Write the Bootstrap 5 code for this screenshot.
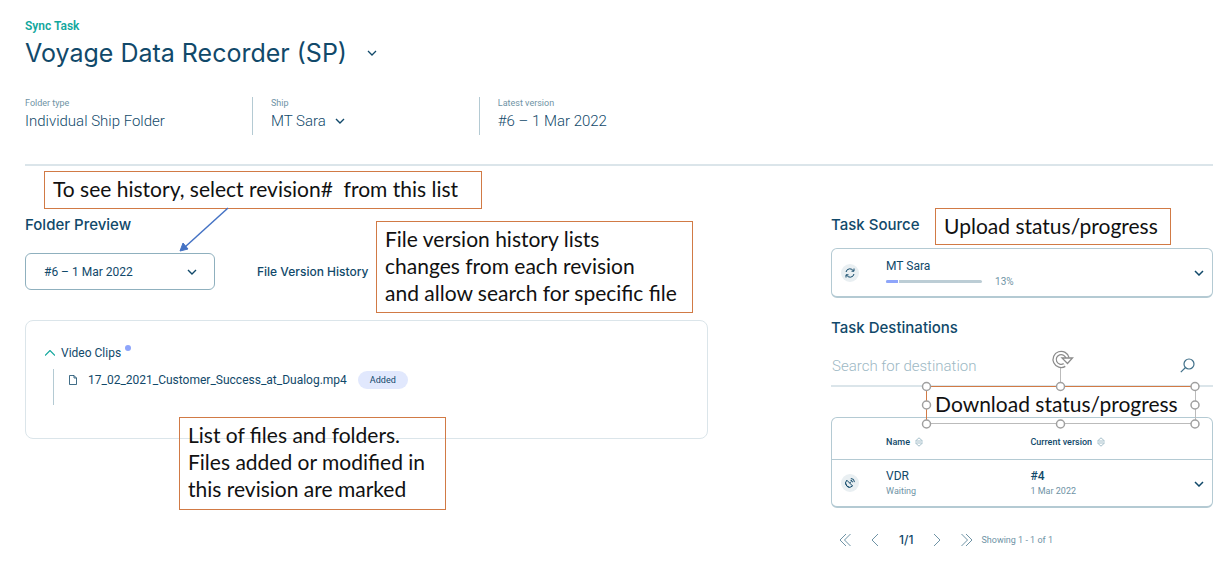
<!DOCTYPE html>
<html lang="en">
<head>
<meta charset="utf-8">
<meta name="viewport" content="width=device-width, initial-scale=1">
<title>Sync Task – Voyage Data Recorder (SP)</title>
<link href="https://cdn.jsdelivr.net/npm/bootstrap@5.3.0/dist/css/bootstrap.min.css" rel="stylesheet">
<style>
:root{--ink:#11496a;--soft:#41708a;--mute:#6f93a5;--edge:#b4cad3;--pale:#dbe5ea;--teal:#12a79d;--note:#d17a45}
body{font-family:Roboto,"Liberation Sans",sans-serif;font-size:12px;line-height:16px;color:var(--ink);background:#fff}
svg{display:block;fill:none;stroke:currentColor;flex:none}
.page{padding:18px 6px 12px 25px}
.geo{font-family:Inter,"Open Sans",sans-serif}
.kicker{color:var(--teal);font-weight:600}
.title{font-size:25px;line-height:36px;font-weight:400;gap:20px;margin:1px 0 26px}
.plain{border:0;background:none;padding:0;color:inherit}
.facts{padding-bottom:29px;border-bottom:2px solid var(--pale)}
.fact{width:19.1%;height:38px;font-size:15px;line-height:20px;font-weight:300;color:var(--ink)}
.fact + .fact{border-left:1px solid var(--edge);padding-left:18px}
.fact-value{margin-top:2px}
.tiny{font-size:9px;line-height:12px;font-weight:400;color:var(--mute)}
.pick{appearance:none;border:0;padding:0 18px 0 0;color:inherit;font-weight:inherit;background:url("data:image/svg+xml,%3Csvg xmlns='http://www.w3.org/2000/svg' viewBox='0 0 10 6'%3E%3Cpath d='M1 1l4 4 4-4' fill='none' stroke='%2311496a' stroke-width='1.4'/%3E%3C/svg%3E") no-repeat right center/10px 6px}
.split{grid-template-columns:57.5% 32.15%;justify-content:space-between;padding-top:47px}
.head{font-size:15px;line-height:24px;font-weight:500;margin:0}
.revision{width:190px;height:37px;border:1px solid #8fb0be;border-radius:6px;padding-left:18px;background-position:right 17px center;font-size:12px;line-height:16px}
.history{font-size:12px;font-weight:500;color:var(--ink);margin-left:42px}
.files{margin-top:30px;border:1px solid var(--pale);border-radius:8px;padding:24px 19px 33px}
.files .dot{width:6px;height:6px;border-radius:50%;background:#8ea5fb;margin-left:4px}
.folder{gap:6px}
.teal{color:var(--teal)}
.tree{height:36px;margin:8px 0 0 8px;border-left:1px solid var(--edge);padding-left:15px}
.tree-row{gap:11px;height:22px}
.added{background:#e1e8fd;color:var(--ink);font-size:9px;line-height:18px;padding:0 12px;border-radius:9px}
.panel{border:1px solid var(--edge);border-bottom-width:2px;border-radius:6px}
.source{margin-top:11px;height:50px}
.source-name{line-height:18px}
.c-icon{width:54px;padding-left:9px}
.round{width:18px;height:18px;border-radius:50%;background:#e9eff2}
.track{width:96px;height:3px;border-radius:2px;background:#bccdd5;overflow:hidden}
.track span{display:block;height:3px;background:#8ea5fb;border-right:1px solid #fff}
.percent{font-size:10px;line-height:14px;margin-left:13px;color:var(--mute)}
.second{margin-top:18px}
.find{height:41px;margin-top:6px;border-bottom:2px solid var(--pale)}
.find input{border:0;outline:0;padding:0 1px;font-size:15px;font-weight:300;color:var(--ink);background:none;min-width:0}
.find input::placeholder{color:#9db8c4;opacity:1}
.find button{color:var(--soft);margin-right:18px}
.ships{margin-top:30px}
.ships table{width:100%;table-layout:fixed}
.ships th{font-size:9px;line-height:12px;font-weight:500;height:41px;padding:8px 0 0;border-bottom:1px solid var(--edge)}
.ships td{height:47px;padding:0}
.ships .state{line-height:14px}
.ships .c-icon{padding-left:9px}
.c-name{width:38%}
.c-more{width:18px}
.sorter{color:#a5bfca}
.pager{margin-top:20px;height:24px;color:var(--mute);padding-left:8px}
.page-no{color:var(--ink);font-weight:500}
/* callouts laid over the page */
.note{position:absolute;border:1px solid var(--note);font-family:Lato,"Open Sans",sans-serif;font-size:21px;line-height:27px;color:#111;padding:3px 8px;white-space:pre}
.n-list{left:19px;top:5px;width:438px;height:38px}
.n-hist{left:351px;top:55px;width:317px;height:92px}
.n-file{left:154px;top:251px;width:267px;height:93px}
.n-up{left:104px;top:-5px;width:236px;height:37px}
.n-down{left:95px;top:173px;width:270px;height:38px;border-color:var(--note) #bbb #bbb var(--note)}
.arrow{position:absolute;left:152px;top:41px;color:#4472c4}
.grips{position:absolute;left:-6px;top:-38px}
</style>
</head>
<body>
<main class="page">
  <header>
    <div class="kicker">Sync Task</div>
    <h1 class="title geo d-flex align-items-center">Voyage Data Recorder (SP)
      <button class="plain" aria-label="Switch task"><svg width="10" height="6" viewBox="0 0 10 6" stroke-width="1.3"><path d="M1 1l4 4 4-4"/></svg></button></h1>
    <div class="facts d-flex">
      <div class="fact"><div class="tiny">Folder type</div><div class="fact-value">Individual Ship Folder</div></div>
      <div class="fact"><label class="tiny d-block" for="ship">Ship</label><select id="ship" class="pick fact-value"><option>MT Sara</option></select></div>
      <div class="fact"><div class="tiny">Latest version</div><div class="fact-value">#6 – 1 Mar 2022</div></div>
    </div>
  </header>

  <div class="split d-grid position-relative">
    <section>
      <h2 class="head geo"><label for="rev">Folder Preview</label></h2>
      <div class="d-flex align-items-center mt-3">
        <select id="rev" class="pick revision"><option>#6 – 1 Mar 2022</option></select>
        <a href="#history" class="history geo text-decoration-none">File Version History</a>
      </div>
      <div class="files">
        <div class="folder d-flex align-items-center">
          <button class="plain" aria-label="Collapse Video Clips"><svg class="teal" width="10" height="6" viewBox="0 0 10 6" stroke-width="1.2"><path d="M0 5.500l5-5 5 5"/></svg></button>
          <span class="d-flex">Video Clips<span class="dot"></span></span>
        </div>
        <div class="tree"><div class="tree-row d-flex align-items-center">
          <svg width="8" height="10" viewBox="0 0 8 10" stroke-width=".8"><path d="M.5.500h4.500L7.500 3v6.500h-7zM5 .5V3h2.500"/></svg>
          <span>17_02_2021_Customer_Success_at_Dualog.mp4</span><span class="added">Added</span>
        </div></div>
      </div>
    </section>

    <section class="position-relative">
      <h2 class="head geo">Task Source</h2>
      <div class="panel source d-flex align-items-center">
        <div class="c-icon"><div class="round d-flex align-items-center justify-content-center">
          <svg width="10" height="10" viewBox="0 0 10 10"><path d="M1 4a4 4 0 0 1 7.500-1M9 .5V3.200H6.500M9 6a4 4 0 0 1-7.500 1M1 9.500V6.800h2.500"/></svg></div></div>
        <div class="flex-grow-1">
          <div class="source-name">MT Sara</div>
          <div class="d-flex align-items-center"><div class="track" role="progressbar" aria-label="Upload" aria-valuenow="13" aria-valuemin="0" aria-valuemax="100"><span style="width:13%"></span></div><span class="percent">13%</span></div>
        </div>
        <button class="plain me-2" aria-label="Show source details"><svg width="10" height="6" viewBox="0 0 10 6" stroke-width="1.5"><path d="M1 1l4 4 4-4"/></svg></button>
      </div>

      <h2 class="head geo second"><label for="dest">Task Destinations</label></h2>
      <div class="find d-flex align-items-center">
        <input id="dest" type="text" class="flex-grow-1" placeholder="Search for destination">
        <button class="plain" aria-label="Search"><svg width="15" height="15" viewBox="0 0 15 15" stroke-width="1.200"><circle cx="9" cy="6" r="5"/><path d="M5.500 9.500L.8 14.200"/></svg></button>
      </div>

      <div class="panel ships">
        <table>
          <thead><tr><th class="c-icon"></th>
            <th class="c-name" scope="col"><span class="d-flex align-items-center">Name<svg class="sorter ms-1" width="10" height="10" viewBox="0 0 10 10"><path d="M1.500 4L5 .8 8.500 4zM1.500 6L5 9.200 8.500 6z"/></svg></span></th>
            <th scope="col"><span class="d-flex align-items-center">Current version<svg class="sorter ms-1" width="10" height="10" viewBox="0 0 10 10"><path d="M1.500 4L5 .8 8.500 4zM1.500 6L5 9.200 8.500 6z"/></svg></span></th>
            <th class="c-more"></th></tr></thead>
          <tbody><tr>
            <td class="c-icon"><div class="round d-flex align-items-center justify-content-center">
              <svg width="10" height="10" viewBox="0 0 10 10"><path d="M1.800 2.200a4 4 0 0 0 5.800 5.800zM4.700 5.100l1.500-1.600M5.500 2.300a2 2 0 0 1 2 2M5.800.5a3.600 3.600 0 0 1 3.600 3.600M1 5.500a3.500 3.500 0 0 0 3.500 3.800"/></svg></div></td>
            <td>VDR<div class="tiny state">Waiting</div></td>
            <td><span class="fw-medium">#4</span><div class="tiny state">1 Mar 2022</div></td>
            <td><button class="plain" aria-label="Show VDR details"><svg width="10" height="6" viewBox="0 0 10 6" stroke-width="1.500"><path d="M1 1l4 4 4-4"/></svg></button></td>
          </tr></tbody>
        </table>
      </div>

      <nav class="pager d-flex align-items-center" aria-label="Destination pages">
        <button class="plain" aria-label="First page"><svg width="12" height="14" viewBox="0 0 12 14"><path d="M7 1L1 7l6 6M11.500 1l-6 6 6 6"/></svg></button>
        <button class="plain ms-3 ps-1" aria-label="Previous page"><svg width="8" height="14" viewBox="0 0 8 14"><path d="M7 1L1 7l6 6"/></svg></button>
        <span class="geo px-3 mx-1 page-no">1/1</span>
        <button class="plain" aria-label="Next page"><svg width="8" height="14" viewBox="0 0 8 14"><path d="M1 1l6 6-6 6"/></svg></button>
        <button class="plain ms-3 ps-1" aria-label="Last page"><svg width="12" height="14" viewBox="0 0 12 14"><path d="M.5 1l6 6-6 6M5 1l6 6-6 6"/></svg></button>
        <span class="tiny ms-2">Showing 1 - 1 of 1</span>
      </nav>

      <div class="note n-up">Upload status/progress</div>
      <div class="note n-down">Download status/progress<svg class="grips" width="280" height="82" viewBox="0 0 280 82">
        <g stroke="#a0a0a0" stroke-width="1.500"><path d="M139.500 15v19" stroke="#bbb" stroke-width="1"/>
        <g fill="#fff"><circle cx="5.500" cy="37.500" r="4"/><circle cx="139.500" cy="37.500" r="4"/><circle cx="274" cy="37.500" r="4"/><circle cx="5.500" cy="56" r="4"/><circle cx="274" cy="56" r="4"/><circle cx="5.500" cy="75" r="4"/><circle cx="139.500" cy="75" r="4"/><circle cx="274" cy="75" r="4"/></g>
        <path stroke="#8c8c8c" stroke-width="4.500" d="M143.500 16a6.500 6.500 0 1 1 3-7"/><path stroke="#fff" stroke-width="2" d="M143.500 16a6.500 6.500 0 1 1 3-7"/><path fill="#fff" stroke="#8c8c8c" stroke-width="1.300" d="M141 9h10.500l-5 5.500z"/></g></svg></div>
    </section>

    <div class="note n-list">To see history, select revision#  from this list</div>
    <div class="note n-hist">File version history lists
changes from each revision
and allow search for specific file</div>
    <div class="note n-file">List of files and folders.
Files added or modified in
this revision are marked</div>
    <svg class="arrow" width="54" height="46" viewBox="0 0 54 46" stroke-width="1.500"><path d="M51 1L8 40"/><path d="M3 44l3-8 5 6z" fill="#4472c4" stroke-width="1"/></svg>
  </div>
</main>
<script src="https://cdn.jsdelivr.net/npm/bootstrap@5.3.0/dist/js/bootstrap.bundle.min.js"></script>
</body>
</html>
